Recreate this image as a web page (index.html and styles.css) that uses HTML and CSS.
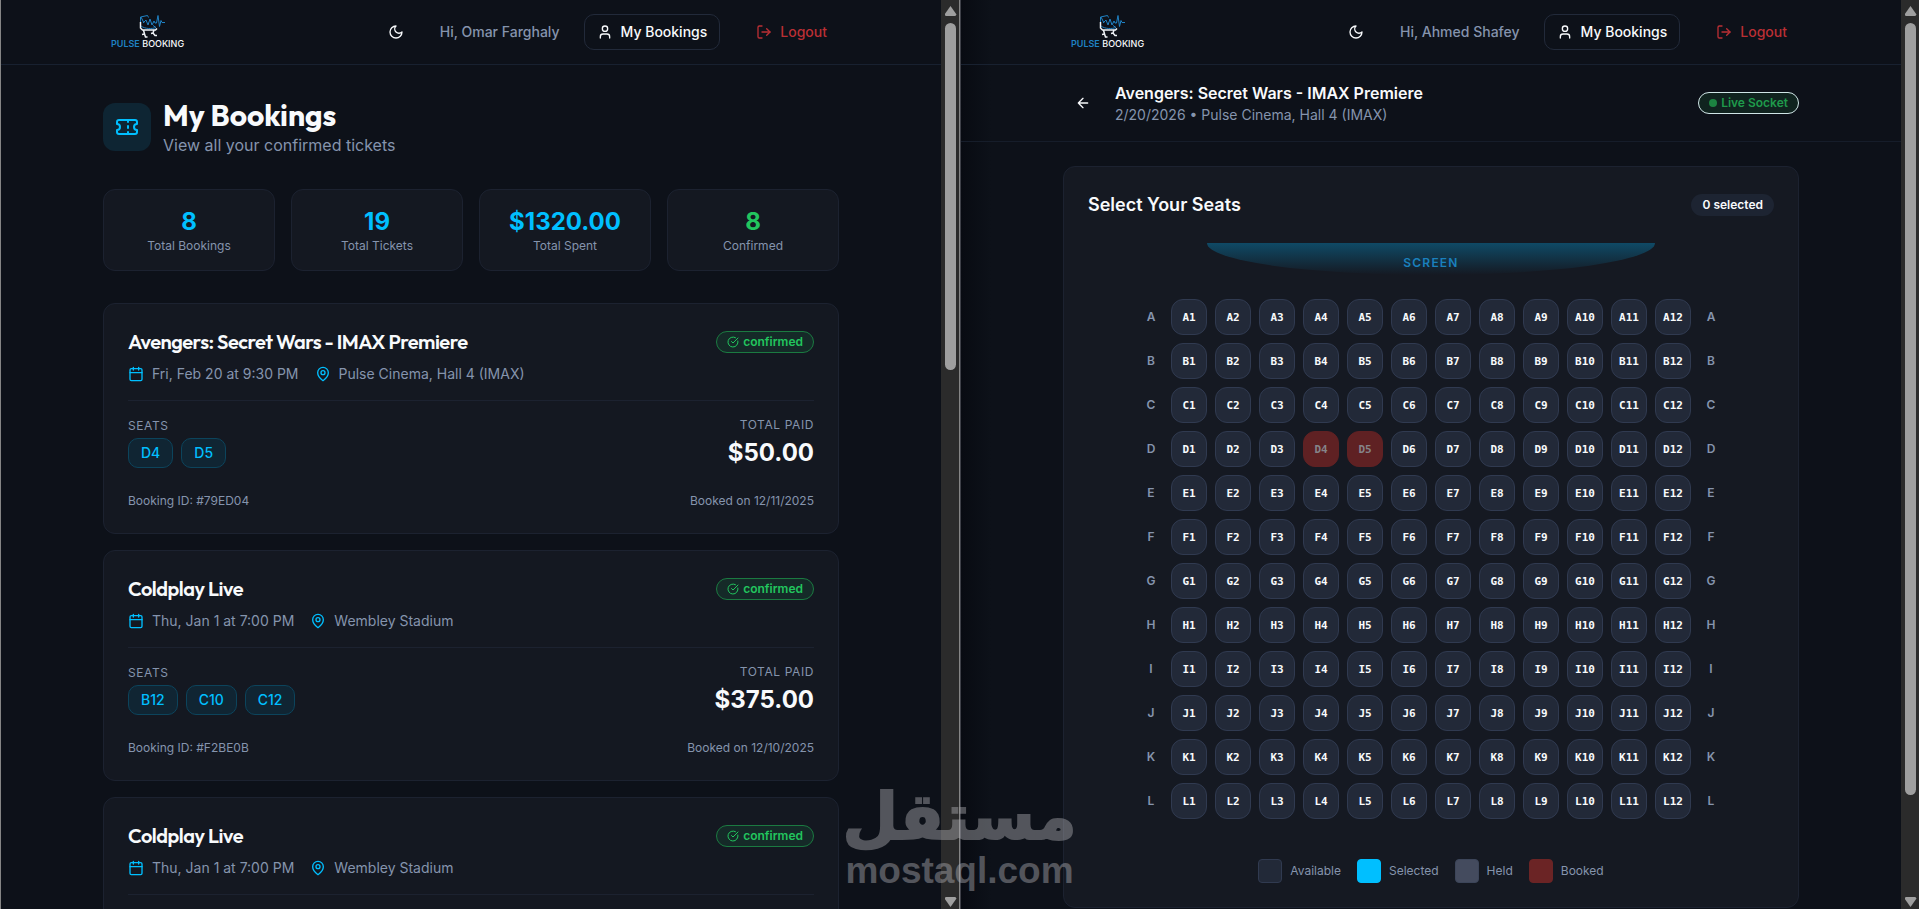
FILE: index.html
```html
<!DOCTYPE html>
<html lang="en">
<head>
<meta charset="utf-8">
<title>Pulse Booking</title>
<link rel="stylesheet" href="styles.css">
</head>
<body>
<svg class="sprite" aria-hidden="true">
  <symbol id="i-moon" viewBox="0 0 24 24"><path d="M12 3a6 6 0 0 0 9 9 9 9 0 1 1-9-9Z"/></symbol>
  <symbol id="i-user" viewBox="0 0 24 24"><path d="M19 21v-2a4 4 0 0 0-4-4H9a4 4 0 0 0-4 4v2"/><circle cx="12" cy="7" r="4"/></symbol>
  <symbol id="i-logout" viewBox="0 0 24 24"><path d="M9 21H5a2 2 0 0 1-2-2V5a2 2 0 0 1 2-2h4"/><path d="m16 17 5-5-5-5"/><path d="M21 12H9"/></symbol>
  <symbol id="i-ticket" viewBox="0 0 24 24"><path d="M2 9a3 3 0 0 1 0 6v2a2 2 0 0 0 2 2h16a2 2 0 0 0 2-2v-2a3 3 0 0 1 0-6V7a2 2 0 0 0-2-2H4a2 2 0 0 0-2 2Z"/><path d="M13 5v2M13 17v2M13 11v2"/></symbol>
  <symbol id="i-calendar" viewBox="0 0 24 24"><path d="M8 2v4M16 2v4"/><rect width="18" height="18" x="3" y="4" rx="2"/><path d="M3 10h18"/></symbol>
  <symbol id="i-pin" viewBox="0 0 24 24"><path d="M20 10c0 6-8 12-8 12s-8-6-8-12a8 8 0 0 1 16 0Z"/><circle cx="12" cy="10" r="3"/></symbol>
  <symbol id="i-check" viewBox="0 0 24 24"><path d="M21.8 10A10 10 0 1 1 17 3.34"/><path d="m9 11 3 3L22 4"/></symbol>
  <symbol id="i-back" viewBox="0 0 24 24"><path d="m12 19-7-7 7-7M19 12H5"/></symbol>
  <symbol id="i-logo" viewBox="0 0 26 24">
    <g stroke="#1f82c4" stroke-width="1"><path d="M1.5 8V3l7-1.5 1 2M2 3l3 6M4 9l3-3 2 5 2-6 2 6 2-4 1 2h1.500l1.5-7.5 1.5 11 1.5-6 1 2h3"/><path d="M2 12c4 3 11 3 15 1.5l-3-2"/></g>
    <g stroke="#f0f4f8" stroke-width="1.5"><path d="M1.500 8v6l2 2h13l1.5-1.5M4.5 16l1 4-2.5.5M5.5 20l1 3h2M15 16l-1 3-2 .5M14 19l2 2.500h2"/></g>
  </symbol>
</svg>

<div class="split">
  <section class="pane">
    <div class="view">
      <header class="topbar">
        <div class="container topbar-inner">
          <a class="brand" href="#"><svg class="brand-mark"><use href="#i-logo"/></svg><span class="brand-name"><b>PULSE</b> BOOKING</span></a>
          <nav class="nav">
            <button class="btn btn-icon" aria-label="Toggle theme"><svg class="icon"><use href="#i-moon"/></svg></button>
            <span class="hello">Hi, Omar Farghaly</span>
            <a class="btn btn-outline" href="#"><svg class="icon"><use href="#i-user"/></svg>My Bookings</a>
            <button class="btn btn-logout"><svg class="icon"><use href="#i-logout"/></svg>Logout</button>
          </nav>
        </div>
      </header>
      <main class="container bookings">
        <div class="page-head">
          <span class="page-icon"><svg class="icon icon-lg"><use href="#i-ticket"/></svg></span>
          <div>
            <h1 class="page-title">My Bookings</h1>
            <p class="page-sub">View all your confirmed tickets</p>
          </div>
        </div>
        <div class="stats">
          <div class="stat"><strong>8</strong><span>Total Bookings</span></div>
          <div class="stat"><strong>19</strong><span>Total Tickets</span></div>
          <div class="stat"><strong>$1320.00</strong><span>Total Spent</span></div>
          <div class="stat stat-ok"><strong>8</strong><span>Confirmed</span></div>
        </div>
        <div class="list">
          <article class="booking">
            <div class="booking-head"><h2>Avengers: Secret Wars - IMAX Premiere</h2><span class="badge badge-ok"><svg class="icon icon-sm"><use href="#i-check"/></svg>confirmed</span></div>
            <div class="meta"><span><svg class="icon"><use href="#i-calendar"/></svg>Fri, Feb 20 at 9:30 PM</span><span><svg class="icon"><use href="#i-pin"/></svg>Pulse Cinema, Hall 4 (IMAX)</span></div>
            <div class="details">
              <div><p class="label">SEATS</p><div class="chips"><span>D4</span><span>D5</span></div></div>
              <div class="paid"><p class="label">TOTAL PAID</p><strong>$50.00</strong></div>
            </div>
            <div class="foot"><span>Booking ID: #79ED04</span><span>Booked on 12/11/2025</span></div>
          </article>
          <article class="booking">
            <div class="booking-head"><h2>Coldplay Live</h2><span class="badge badge-ok"><svg class="icon icon-sm"><use href="#i-check"/></svg>confirmed</span></div>
            <div class="meta"><span><svg class="icon"><use href="#i-calendar"/></svg>Thu, Jan 1 at 7:00 PM</span><span><svg class="icon"><use href="#i-pin"/></svg>Wembley Stadium</span></div>
            <div class="details">
              <div><p class="label">SEATS</p><div class="chips"><span>B12</span><span>C10</span><span>C12</span></div></div>
              <div class="paid"><p class="label">TOTAL PAID</p><strong>$375.00</strong></div>
            </div>
            <div class="foot"><span>Booking ID: #F2BE0B</span><span>Booked on 12/10/2025</span></div>
          </article>
          <article class="booking">
            <div class="booking-head"><h2>Coldplay Live</h2><span class="badge badge-ok"><svg class="icon icon-sm"><use href="#i-check"/></svg>confirmed</span></div>
            <div class="meta"><span><svg class="icon"><use href="#i-calendar"/></svg>Thu, Jan 1 at 7:00 PM</span><span><svg class="icon"><use href="#i-pin"/></svg>Wembley Stadium</span></div>
            <div class="details"></div>
          </article>
        </div>
      </main>
    </div>
    <div class="track" aria-hidden="true"><i class="arrow arrow-up"></i><div class="rail"><i class="thumb thumb-short"></i></div><i class="arrow arrow-down"></i></div>
  </section>

  <section class="pane pane-right">
    <div class="view">
      <header class="topbar">
        <div class="container topbar-inner">
          <a class="brand" href="#"><svg class="brand-mark"><use href="#i-logo"/></svg><span class="brand-name"><b>PULSE</b> BOOKING</span></a>
          <nav class="nav">
            <button class="btn btn-icon" aria-label="Toggle theme"><svg class="icon"><use href="#i-moon"/></svg></button>
            <span class="hello">Hi, Ahmed Shafey</span>
            <a class="btn btn-outline" href="#"><svg class="icon"><use href="#i-user"/></svg>My Bookings</a>
            <button class="btn btn-logout"><svg class="icon"><use href="#i-logout"/></svg>Logout</button>
          </nav>
        </div>
      </header>
      <div class="eventbar">
        <div class="container eventbar-inner">
          <button class="btn btn-icon" aria-label="Back"><svg class="icon"><use href="#i-back"/></svg></button>
          <div class="event">
            <h1>Avengers: Secret Wars - IMAX Premiere</h1>
            <p>2/20/2026 • Pulse Cinema, Hall 4 (IMAX)</p>
          </div>
          <span class="badge badge-live"><i class="dot"></i>Live Socket</span>
        </div>
      </div>
      <main class="container seating">
        <div class="panel">
          <div class="panel-head"><h2>Select Your Seats</h2><span class="badge badge-count">0 selected</span></div>
          <div class="screen">SCREEN</div>
          <div class="rows" id="rows"></div>
          <div class="legend">
            <span><i class="swatch"></i>Available</span>
            <span><i class="swatch swatch-selected"></i>Selected</span>
            <span><i class="swatch swatch-held"></i>Held</span>
            <span><i class="swatch swatch-booked"></i>Booked</span>
          </div>
        </div>
      </main>
    </div>
    <div class="track" aria-hidden="true"><i class="arrow arrow-up"></i><div class="rail"><i class="thumb thumb-long"></i></div><i class="arrow arrow-down"></i></div>
  </section>
</div>

<div class="watermark"><span class="wm-ar" lang="ar" dir="rtl">مستقل</span><span class="wm-en">mostaql.com</span></div>
<script src="app.js"></script>
</body>
</html>
```
FILE: styles.css
```css
:root {
  --bg: #0d1119;
  --card: #141821;
  --line: #1c2230;
  --text: #f8fafc;
  --muted: #8594ad;
  --primary: #00bfff;
  --green: #22c55e;
}
* { box-sizing: border-box; margin: 0; padding: 0; }
body {
  height: 100vh;
  overflow: hidden;
  background: #858585;
  color: var(--text);
  font: 400 14px/20px Inter, "Liberation Sans", sans-serif;
}
button { font: inherit; color: inherit; background: none; border: 0; cursor: pointer; }
a { color: inherit; text-decoration: none; }
.sprite { display: none; }

.split { display: grid; grid-template-columns: minmax(0, 1fr) minmax(0, 1fr); gap: 1px; height: 100vh; }
.pane { display: flex; min-height: 0; background: var(--bg); border-left: 1px solid #858585; }
.pane-right { background: linear-gradient(90deg, #080b12, var(--bg) 30px); border-left-color: #3e4048; }
.view { flex: 1; min-width: 0; overflow-y: auto; scrollbar-width: none; }
.container { width: 100%; max-width: 768px; margin: 0 auto; padding: 0 16px; }

.icon { width: 16px; height: 16px; flex: none; fill: none; stroke: currentColor; stroke-width: 2; stroke-linecap: round; stroke-linejoin: round; }
.icon-sm { width: 12px; height: 12px; }
.icon-lg { width: 24px; height: 24px; }

.topbar { border-bottom: 1px solid #182130; }
.topbar-inner { display: flex; align-items: center; justify-content: space-between; height: 64px; }
.brand { display: flex; flex-direction: column; align-items: center; padding: 0 8px; }
.brand-mark { width: 26px; height: 24px; margin-left: 8px; fill: none; }
.brand-name { font: 500 9px/12px Inter, sans-serif; }
.brand-name b { font-weight: 600; color: #1f82c4; }
.nav { display: flex; align-items: center; gap: 24px; font-weight: 500; }
.hello { color: var(--muted); }
.btn { display: inline-flex; align-items: center; justify-content: center; gap: 8px; height: 36px; padding: 0 12px; border-radius: 10px; font-weight: 500; }
.btn-outline { border: 1px solid #222a3a; }
.btn-logout { color: #bb2f34; }

.bookings { padding-top: 32px; padding-bottom: 32px; }
.page-head { display: flex; align-items: center; gap: 12px; margin-bottom: 32px; }
.page-icon { display: grid; place-items: center; width: 48px; height: 48px; border-radius: 12px; background: #0e2533; color: var(--primary); }
.page-title { font: 700 30px/36px Outfit, Lato, sans-serif; }
.page-sub { font-size: 16px; line-height: 24px; color: var(--muted); }

.stats { display: grid; grid-template-columns: repeat(4, 1fr); gap: 16px; margin-bottom: 32px; }
.stat, .booking, .panel { background: var(--card); border: 1px solid var(--line); border-radius: 12px; }
.stat { display: flex; flex-direction: column; align-items: center; padding: 16px; }
.stat strong { font-size: 24px; line-height: 32px; color: var(--primary); }
.stat span { font-size: 12px; line-height: 16px; color: var(--muted); }
.stat-ok strong { color: var(--green); }

.list { display: flex; flex-direction: column; gap: 16px; }
.booking { padding: 24px; }
.booking-head, .panel-head { display: flex; align-items: center; justify-content: space-between; }
.booking h2 { font: 600 20px/28px Outfit, Lato, sans-serif; letter-spacing: -0.025em; }
.meta { display: flex; gap: 16px; margin: 8px 0 16px; color: var(--muted); }
.meta span { display: flex; align-items: center; gap: 8px; }
.meta .icon { color: var(--primary); }
.details { display: flex; align-items: center; justify-content: space-between; padding: 16px 0 24px; border-top: 1px solid var(--line); }
.label { margin-bottom: 4px; font-size: 12px; line-height: 16px; letter-spacing: 0.05em; color: var(--muted); }
.chips { display: flex; gap: 8px; }
.chips span { padding: 4px 12px; border: 1px solid #0c445c; border-radius: 10px; background: #102533; color: var(--primary); font-weight: 500; }
.paid { text-align: right; }
.paid strong { display: block; font-size: 24px; line-height: 32px; }
.foot { display: flex; justify-content: space-between; font-size: 12px; line-height: 16px; color: var(--muted); }

.badge { display: inline-flex; align-items: center; gap: 4px; padding: 2px 10px; border: 1px solid transparent; border-radius: 11px; font-size: 12px; line-height: 16px; font-weight: 600; }
.badge-ok { background: #152a28; border-color: #1b7a41; color: var(--green); }
.badge-live { background: #10231f; border-color: #cfe5e6; color: #1f9a4b; }
.badge-count { background: #1d2432; }
.dot { width: 8px; height: 8px; border-radius: 50%; background: #1c8441; }

.eventbar { border-bottom: 1px solid #161d2a; }
.eventbar-inner { display: flex; align-items: center; gap: 12px; padding-top: 16px; padding-bottom: 16px; }
.event { flex: 1; }
.event h1 { font-size: 16px; line-height: 24px; font-weight: 600; }
.event p { color: var(--muted); }

.seating { padding-top: 24px; padding-bottom: 24px; }
.panel { padding: 24px; background: #151922; }
.panel h2 { font-size: 18px; line-height: 28px; font-weight: 600; }
.screen {
  width: 66%; max-width: 448px; height: 32px; margin: 24px auto; padding-top: 8px;
  border-radius: 0 0 50% 50% / 0 0 100% 100%;
  background: linear-gradient(#0f4a66, rgba(15, 74, 102, 0));
  color: #1a80bd; font-size: 12px; line-height: 24px; font-weight: 600; letter-spacing: 0.1em; text-align: center;
}
.rows { display: flex; flex-direction: column; align-items: center; gap: 8px; }
.row { display: flex; align-items: center; gap: 8px; }
.row-name { width: 24px; text-align: center; font-size: 12px; line-height: 16px; font-weight: 600; color: var(--muted); }
.seat {
  width: 36px; height: 36px; padding-top: 2px; border: 1px solid #303a50; border-radius: 12px; background: #222938;
  color: var(--text); font: 700 11px/16px "DejaVu Sans Mono", monospace;
}
.seat:disabled { background: #5f2123; border-color: #5f2123; color: #858489; }
.legend { display: flex; justify-content: center; gap: 16px; margin-top: 40px; font-size: 12px; color: var(--muted); }
.legend span { display: flex; align-items: center; gap: 8px; }
.swatch { width: 24px; height: 24px; border: 1px solid #303a50; border-radius: 4px; background: #222938; }
.swatch-selected { background: var(--primary); border-color: var(--primary); }
.swatch-held { background: #444b5e; border-color: #3c4559; }
.swatch-booked { background: #6b2425; border-color: #6b2425; }

.track { display: flex; flex-direction: column; align-items: center; width: 18px; padding: 6px 2px 2px 3px; background: #2b2b2b; }
.arrow { width: 12px; height: 10px; background: #9f9f9f; }
.arrow-up { clip-path: polygon(50% 0, 100% 85%, 90% 100%, 10% 100%, 0 85%); }
.arrow-down { clip-path: polygon(10% 0, 90% 0, 100% 15%, 50% 100%, 0 15%); }
.rail { flex: 1; width: 11px; margin: 7px 0; }
.thumb { display: block; border-radius: 6px; background: #9f9f9f; }
.thumb-short { height: 40%; }
.thumb-long { height: 89%; }

.watermark {
  position: absolute; left: 50%; bottom: 16px; width: 240px; margin-left: -120px;
  display: flex; flex-direction: column; align-items: center;
  color: #b4b4b8; opacity: 0.42; pointer-events: none; white-space: nowrap;
}
.wm-ar { font: 700 64px/64px "DejaVu Sans", sans-serif; -webkit-text-stroke: 2px #b4b4b8; }
.wm-en { font: 700 37px/44px "Liberation Sans", sans-serif; }
```
FILE: app.js
```js
const booked = new Set(["D4", "D5"]);
const rows = document.getElementById("rows");

for (const name of "ABCDEFGHIJKL") {
  const row = document.createElement("div");
  row.className = "row";
  const label = document.createElement("span");
  label.className = "row-name";
  label.textContent = name;
  row.append(label);
  for (let n = 1; n <= 12; n++) {
    const seat = document.createElement("button");
    seat.className = "seat";
    seat.textContent = name + n;
    seat.disabled = booked.has(name + n);
    row.append(seat);
  }
  row.append(label.cloneNode(true));
  rows.append(row);
}
```
